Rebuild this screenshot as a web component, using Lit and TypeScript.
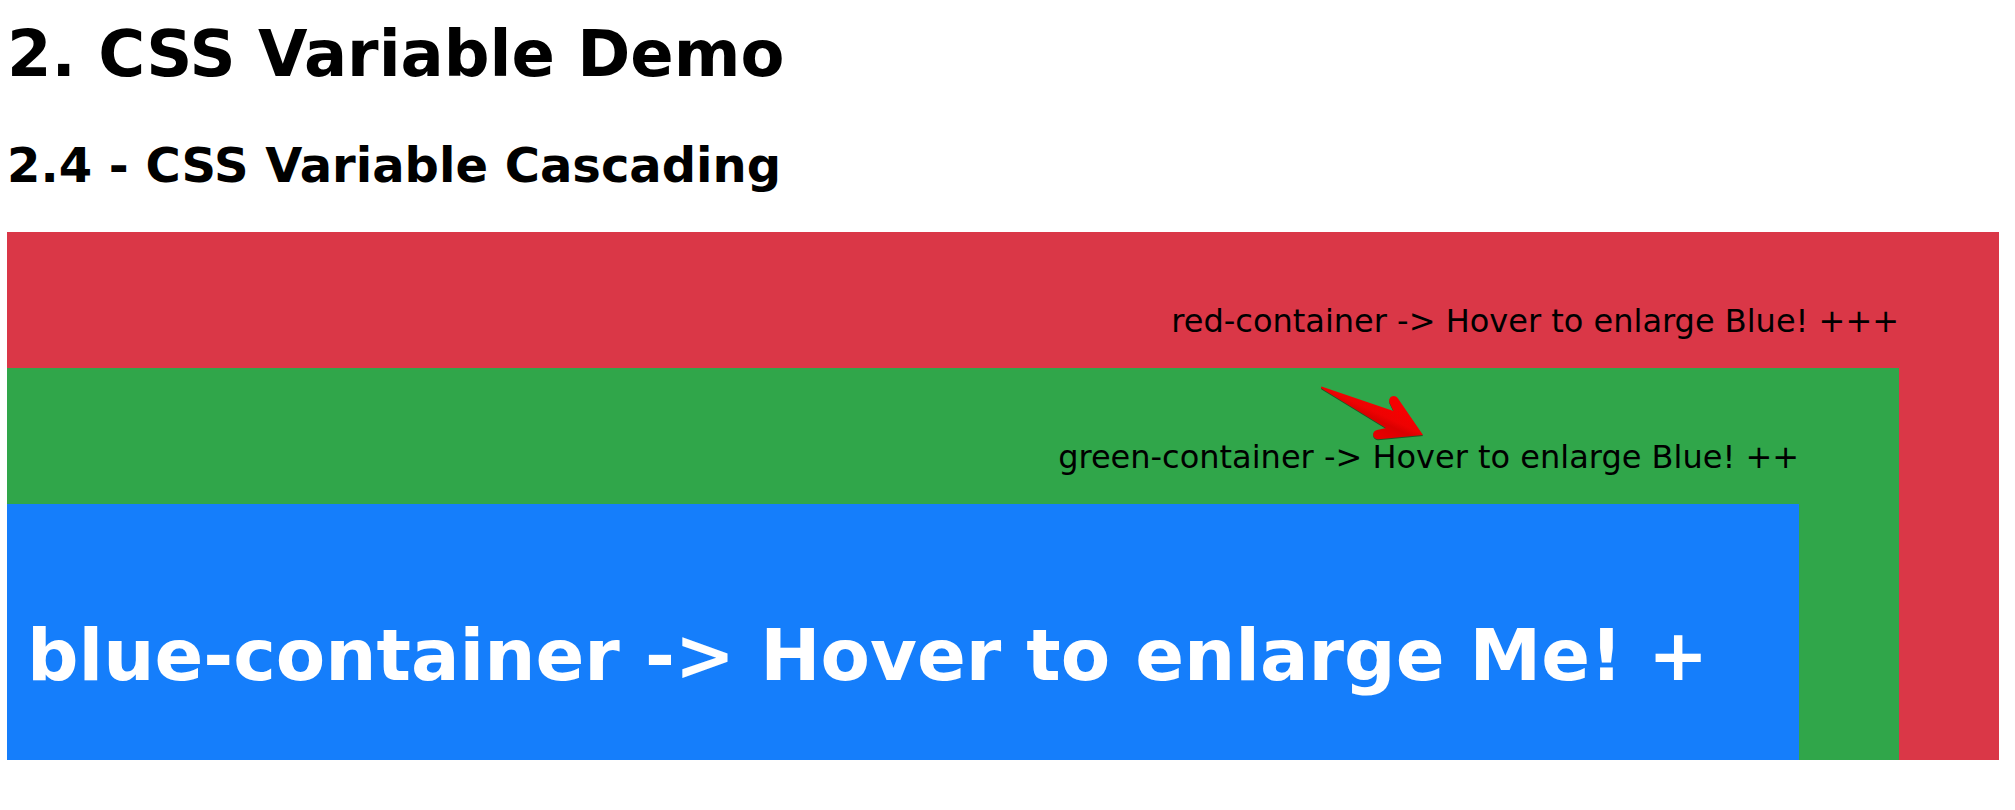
import { LitElement, html, css } from "lit";
import { customElement } from "lit/decorators.js";

@customElement("app-root")
export class AppRoot extends LitElement {
  static styles = css`
    :host {
      display: block;
      padding: 14px 16px 48px 7px;
      background: #fff;
      color: #000;
      font-family: Verdana, "DejaVu Sans", sans-serif;
      font-size: 32px;
      line-height: 40px;
    }
    h1,
    h2,
    p {
      margin: 0;
    }
    h1 {
      font-size: 64px;
      line-height: 80px;
      margin-bottom: 43px;
    }
    h2 {
      font-size: 48px;
      line-height: 56px;
      margin-bottom: 39px;
    }
    .red,
    .green {
      padding-right: 100px;
      text-align: right;
    }
    .red {
      background: #da3747;
    }
    .green {
      position: relative;
      background: #30a64a;
    }
    .label {
      padding: 69px 0 27px;
    }
    .blue {
      padding: 107px 20px 61px;
      background: #157efb;
      color: #fff;
      font-size: 72px;
      font-weight: bold;
      line-height: 88px;
      text-align: left;
    }
    .arrow {
      position: absolute;
      top: 17px;
      right: 475px;
    }
  `;

  render() {
    return html`
      <h1>2. CSS Variable Demo</h1>
      <h2>2.4 - CSS Variable Cascading</h2>
      <div class="red">
        <p class="label">red-container -&gt; Hover to enlarge Blue! +++</p>
        <div class="green">
          <p class="label">green-container -&gt; Hover to enlarge Blue! ++</p>
          <svg class="arrow" width="104" height="57" viewBox="0 0 104 57" aria-hidden="true">
            <defs>
              <linearGradient id="shade" gradientUnits="userSpaceOnUse" x1="76" y1="22" x2="62" y2="52">
                <stop offset="0" stop-color="#f60000" />
                <stop offset="0.4" stop-color="#ee0202" />
                <stop offset="0.6" stop-color="#da0000" />
                <stop offset="1" stop-color="#e60000" />
              </linearGradient>
            </defs>
            <path
              d="M1.5 1.5 L73.5 26 L69.4 17.5 C68 12 74 8.5 78 13.5 L103 50 L58 54.3 C52 54 51.5 46 57 45 L66 43 L1.5 3.5 Q.5 2 1.5 1.5Z"
              transform="translate(0 1)"
              fill="#1d5a25"
            />
            <path
              d="M1.5 1.5 L73.5 26 L69.4 17.5 C68 12 74 8.5 78 13.5 L103 50 L58 54.3 C52 54 51.5 46 57 45 L66 43 L1.5 3.5 Q.5 2 1.5 1.5Z"
              fill="url(#shade)"
            />
          </svg>
          <div class="blue">blue-container -&gt; Hover to enlarge Me! +</div>
        </div>
      </div>
    `;
  }
}
